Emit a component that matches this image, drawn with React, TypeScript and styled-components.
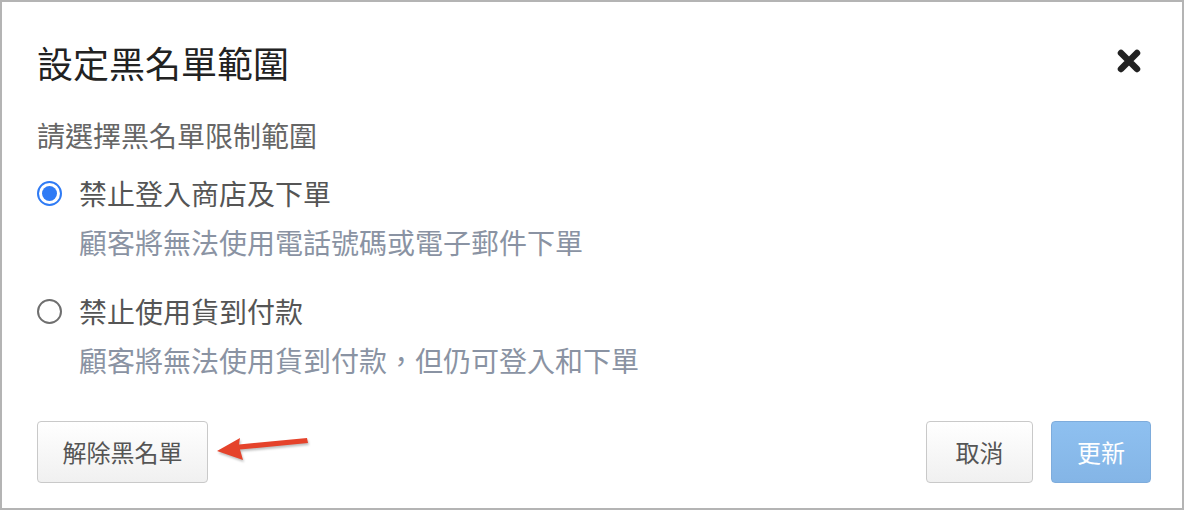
import React from "react";
import styled, { createGlobalStyle } from "styled-components";

const GlobalStyle = createGlobalStyle`
  html, body {
    margin: 0;
    padding: 0;
    background: #ffffff;
  }
  body {
    font-family: "Noto Sans CJK TC", "Noto Sans", sans-serif;
  }
`;

const Dialog = styled.div`
  box-sizing: border-box;
  width: 1184px;
  height: 510px;
  border: 2px solid #b4b4b4;
  background: #fff;
  padding: 39px 31px 25px 35px;
  display: flex;
  flex-direction: column;
`;

const Header = styled.div`
  display: flex;
  align-items: center;
  justify-content: space-between;
  padding-right: 10px;
`;

const Title = styled.h1`
  margin: 0;
  font-size: 36px;
  line-height: 42px;
  font-weight: 400;
  color: #222;
`;

const CloseButton = styled.button`
  border: none;
  background: none;
  padding: 0;
  width: 24px;
  height: 24px;
  display: flex;
  cursor: pointer;
  margin-top: -2px;
`;

const Hint = styled.p`
  margin: 32px 0 0;
  font-size: 28px;
  line-height: 40px;
  color: #666;
`;

const Option = styled.label<{ $gap: number }>`
  display: flex;
  flex-direction: column;
  margin-top: ${(p) => p.$gap}px;
  cursor: pointer;
`;

const OptionRow = styled.span`
  display: flex;
  align-items: center;
  gap: 17px;
`;

const Radio = styled.span<{ $checked?: boolean }>`
  box-sizing: border-box;
  width: 25px;
  height: 25px;
  border-radius: 50%;
  border: 2px solid ${(p) => (p.$checked ? "#2f7bf5" : "#6f6f6f")};
  display: flex;
  align-items: center;
  justify-content: center;

  &::after {
    content: "";
    width: 15px;
    height: 15px;
    border-radius: 50%;
    background: #2f7bf5;
    display: ${(p) => (p.$checked ? "block" : "none")};
  }
`;

const OptionLabel = styled.span`
  font-size: 28px;
  line-height: 40px;
  color: #555;
`;

const OptionDesc = styled.span`
  margin: 9px 0 0 42px;
  font-size: 28px;
  line-height: 40px;
  color: #8a93a3;
`;

const Footer = styled.div`
  position: relative;
  display: flex;
  align-items: center;
  margin-top: auto;
`;

const Spacer = styled.div`
  flex: 1;
`;

const Actions = styled.div`
  display: flex;
  gap: 18px;
`;

const Button = styled.button<{ $w: number; $primary?: boolean }>`
  box-sizing: border-box;
  width: ${(p) => p.$w}px;
  height: 62px;
  padding-bottom: 3px;
  border-radius: 4px;
  font-family: inherit;
  font-size: 24px;
  cursor: pointer;
  border: 1px solid ${(p) => (p.$primary ? "#7eacdc" : "#c9c9c9")};
  color: ${(p) => (p.$primary ? "#ffffff" : "#555")};
  background: ${(p) =>
    p.$primary
      ? "linear-gradient(#8ec0f0, #84b5e6)"
      : "linear-gradient(#ffffff, #f0f0f0)"};
`;

const Arrow = styled.svg`
  position: absolute;
  left: 174px;
  top: 9px;
  filter: drop-shadow(1px 2px 1px rgba(0, 0, 0, 0.25));
`;

const CloseIcon = () => (
  <svg width="24" height="24" viewBox="0 0 24 24">
    <path
      d="M4 4L20 20M20 4L4 20"
      stroke="#222"
      strokeWidth="6.5"
      strokeLinecap="round"
    />
  </svg>
);

export default function App() {
  return (
    <>
      <GlobalStyle />
      <Dialog>
        <Header>
          <Title>設定黑名單範圍</Title>
          <CloseButton aria-label="關閉">
            <CloseIcon />
          </CloseButton>
        </Header>

        <Hint>請選擇黑名單限制範圍</Hint>

        <Option $gap={18}>
          <OptionRow>
            <Radio $checked />
            <OptionLabel>禁止登入商店及下單</OptionLabel>
          </OptionRow>
          <OptionDesc>顧客將無法使用電話號碼或電子郵件下單</OptionDesc>
        </Option>

        <Option $gap={29}>
          <OptionRow>
            <Radio />
            <OptionLabel>禁止使用貨到付款</OptionLabel>
          </OptionRow>
          <OptionDesc>顧客將無法使用貨到付款，但仍可登入和下單</OptionDesc>
        </Option>

        <Footer>
          <Button $w={171}>解除黑名單</Button>
          <Arrow width="104" height="40" viewBox="0 0 104 40">
            <polygon
              points="6,21 29,8 28,14.5 96,8 97,13 29,19.5 32,30"
              fill="#e5432b"
            />
          </Arrow>
          <Spacer />
          <Actions>
            <Button $w={107}>取消</Button>
            <Button $w={100} $primary>
              更新
            </Button>
          </Actions>
        </Footer>
      </Dialog>
    </>
  );
}
